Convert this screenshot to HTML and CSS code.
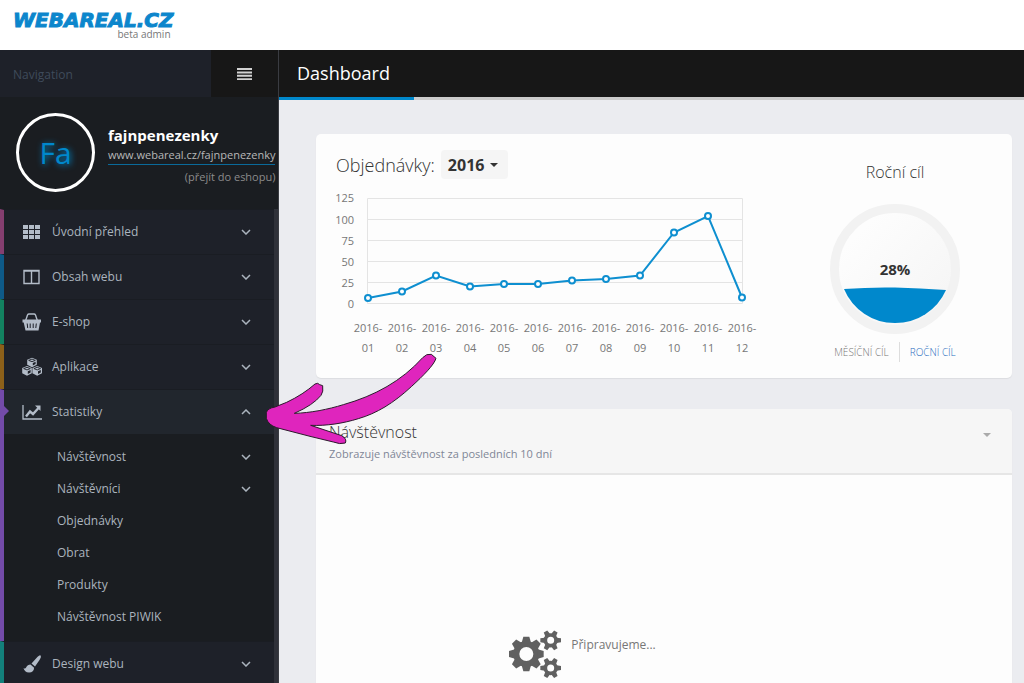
FILE: index.html
```html
<!DOCTYPE html>
<html lang="cs">
<head>
<meta charset="utf-8">
<title>Dashboard – Webareal.cz</title>
<link rel="stylesheet" href="styles.css">
</head>
<body>
<header class="brand">
  <a class="logo" href="#"><span class="logo-name">WEBAREAL.CZ</span><span class="logo-note">beta admin</span></a>
</header>
<div class="shell">
  <aside class="sidebar">
    <div class="side-head">
      <span class="side-title">Navigation</span>
      <button class="burger" type="button" aria-label="Menu"><svg width="15" height="12" viewBox="0 0 15 12"><path d="M0 1h15M0 4.4h15M0 7.8h15M0 11.2h15" stroke="#d2d2d2" stroke-width="2"/></svg></button>
    </div>
    <div class="profile">
      <div class="avatar">Fa</div>
      <div class="who">
        <strong class="who-name">fajnpenezenky</strong>
        <a class="who-link" href="#">www.webareal.cz/fajnpenezenky</a>
        <a class="who-shop" href="#">(přejít do eshopu)</a>
      </div>
    </div>
    <nav class="menu">
      <a class="item plum" href="#"><svg class="icon" viewBox="0 0 20 20"><path fill="#b3bcc8" d="M1 3h5v4H1zM7 3h5v4H7zM13 3h5v4h-5zM1 8h5v4H1zM7 8h5v4H7zM13 8h5v4h-5zM1 13h5v4H1zM7 13h5v4H7zM13 13h5v4h-5z"/></svg><span class="label">Úvodní přehled</span><svg class="chev" viewBox="0 0 10 6"><path d="M1 1l4 4 4-4"/></svg></a>
      <a class="item blue" href="#"><svg class="icon" viewBox="0 0 20 20"><path fill="none" stroke="#b3bcc8" stroke-width="1.4" d="M2 3.5h15v13H2zM9.5 3.5v13M2 4h15"/></svg><span class="label">Obsah webu</span><svg class="chev" viewBox="0 0 10 6"><path d="M1 1l4 4 4-4"/></svg></a>
      <a class="item green" href="#"><svg class="icon" viewBox="0 0 20 20"><path fill="none" stroke="#b3bcc8" stroke-width="1.4" d="M3.500 9l2-6Q6 2 7 2h5q1 0 1.500 1l2 6"/><path fill="#b3bcc8" d="M.5 7.500h18.500v3h-1L16.500 18.500h-13L1.700 10.500H.5z"/><path stroke="#1e2129" stroke-width="1" d="M5.200 11.500l.5 4.500M8.200 11.500V16M11.200 11.500V16M14.300 11.500l-.5 4.500"/></svg><span class="label">E-shop</span><svg class="chev" viewBox="0 0 10 6"><path d="M1 1l4 4 4-4"/></svg></a>
      <a class="item amber" href="#"><svg class="icon" viewBox="0 0 20 20"><g fill="#b3bcc8"><path d="M10 .8l4.800 1.900v5.100L10 10.200 5.200 7.800V2.700z"/><path d="M5 9l4.800 1.900v5.400L5 18.700.2 16.300v-5.400zM15.200 9l4.800 1.900v5.400l-4.800 2.400-4.800-2.400v-5.400z"/></g><path fill="none" stroke="#1e2129" stroke-width=".9" d="M6.700 3.400L10 4.700l3.300-1.300L10 2.100zM1.700 11.600L5 12.900l3.300-1.300L5 10.300zM11.900 11.600l3.300 1.300 3.300-1.300-3.300-1.300z"/><path fill="#1e2129" d="M10.800 6l2.800-1.200v2.300l-2.800 1.400zM5.800 14.200L8.600 13v2.600L5.800 17zM16 14.200l2.800-1.200v2.600L16 17z"/></svg><span class="label">Aplikace</span><svg class="chev" viewBox="0 0 10 6"><path d="M1 1l4 4 4-4"/></svg></a>
      <a class="item violet open" href="#"><svg class="icon" viewBox="0 0 20 20"><path fill="none" stroke="#b3bcc8" stroke-width="1.300" d="M1 3v14h19"/><path fill="none" stroke="#b3bcc8" stroke-width="2.400" d="M4 14.500l4-5 3 2.500 5.500-6"/><path fill="#b3bcc8" d="M13 3.500h5.500V9z"/></svg><span class="label">Statistiky</span><svg class="chev" viewBox="0 0 10 6"><path d="M1 5l4-4 4 4"/></svg></a>
      <div class="submenu">
        <a class="sub" href="#"><span>Návštěvnost</span><svg class="chev" viewBox="0 0 10 6"><path d="M1 1l4 4 4-4"/></svg></a>
        <a class="sub" href="#"><span>Návštěvníci</span><svg class="chev" viewBox="0 0 10 6"><path d="M1 1l4 4 4-4"/></svg></a>
        <a class="sub" href="#"><span>Objednávky</span></a>
        <a class="sub" href="#"><span>Obrat</span></a>
        <a class="sub" href="#"><span>Produkty</span></a>
        <a class="sub" href="#"><span>Návštěvnost PIWIK</span></a>
      </div>
      <a class="item teal" href="#"><svg class="icon" viewBox="0 0 20 20"><path fill="#b3bcc8" d="M18.500 1.500c.8 1 .3 2.500-1 4.500l-4.500 6.500-3.500-3 5-5.500c2-2 3.300-3 4-2.500zM8.500 10.500l3.600 3.200c0 3-2 4.800-5 4.800-3.200 0-5-1.800-5.600-4.500 1 .8 2 .8 2.600-.5.800-2 2.600-3 4.400-3z"/></svg><span class="label">Design webu</span><svg class="chev" viewBox="0 0 10 6"><path d="M1 1l4 4 4-4"/></svg></a>
    </nav>
  </aside>
  <main class="main">
    <div class="topbar"><h1 class="page-title">Dashboard</h1></div>
    <div class="content">
      <section class="card orders">
        <div class="orders-left">
          <div class="orders-head">
            <h2 class="orders-title">Objednávky:</h2>
            <button class="year" type="button">2016<span class="caret"></span></button>
          </div>
          <svg class="chart" viewBox="0 0 430 170" role="img" aria-label="Objednávky 2016">
            <path class="grid" d="M31.500 8.500h375v105h-375zM31.500 29.500h375M31.500 50.500h375M31.500 71.500h375M31.500 92.500h375"/>
            <g class="axis end"><text x="18" y="12">125</text><text x="18" y="34">100</text><text x="18" y="55">75</text><text x="18" y="76">50</text><text x="18" y="97">25</text><text x="18" y="118">0</text></g>
            <g class="axis mid">
              <text x="32" y="142">2016-</text><text x="32" y="162">01</text>
              <text x="66" y="142">2016-</text><text x="66" y="162">02</text>
              <text x="100" y="142">2016-</text><text x="100" y="162">03</text>
              <text x="134" y="142">2016-</text><text x="134" y="162">04</text>
              <text x="168" y="142">2016-</text><text x="168" y="162">05</text>
              <text x="202" y="142">2016-</text><text x="202" y="162">06</text>
              <text x="236" y="142">2016-</text><text x="236" y="162">07</text>
              <text x="270" y="142">2016-</text><text x="270" y="162">08</text>
              <text x="304" y="142">2016-</text><text x="304" y="162">09</text>
              <text x="338" y="142">2016-</text><text x="338" y="162">10</text>
              <text x="372" y="142">2016-</text><text x="372" y="162">11</text>
              <text x="406" y="142">2016-</text><text x="406" y="162">12</text>
            </g>
            <path class="line" d="M32 108L66 101.500 100 85.500 134 96.500 168 94 202 94 236 90.500 270 89 304 85.500 338 42.500 372 26 406 107.500"/>
            <g class="dots"><circle cx="32" cy="108" r="3"/><circle cx="66" cy="101.500" r="3"/><circle cx="100" cy="85.500" r="3"/><circle cx="134" cy="96.500" r="3"/><circle cx="168" cy="94" r="3"/><circle cx="202" cy="94" r="3"/><circle cx="236" cy="90.500" r="3"/><circle cx="270" cy="89" r="3"/><circle cx="304" cy="85.500" r="3"/><circle cx="338" cy="42.500" r="3"/><circle cx="372" cy="26" r="3"/><circle cx="406" cy="107.500" r="3"/></g>
          </svg>
        </div>
        <div class="goal">
          <h2 class="goal-title">Roční cíl</h2>
          <svg class="meter" viewBox="0 0 130 130" role="img" aria-label="28%">
            <defs><linearGradient id="bowl" x1="0" y1="0" x2="1" y2="1"><stop offset=".2" stop-color="#fdfdfd"/><stop offset=".8" stop-color="#f6f6f6"/></linearGradient></defs>
            <circle cx="65" cy="65" r="60.500" fill="url(#bowl)" stroke="#f2f2f2" stroke-width="9"/>
            <path fill="#0088cc" d="M14 85Q40 83 65 83.500T116 86A55.500 55.500 0 0 1 14 85z"/>
            <text class="percent" x="65" y="71">28%</text>
          </svg>
          <div class="tabs"><a class="tab" href="#">MĚSÍČNÍ CÍL</a><a class="tab active" href="#">ROČNÍ CÍL</a></div>
        </div>
      </section>
      <section class="card visits">
        <header class="visits-head">
          <div><h2 class="visits-title">Návštěvnost</h2><p class="visits-note">Zobrazuje návštěvnost za posledních 10 dní</p></div>
          <button class="toggle" type="button" aria-label="Sbalit"><span class="caret"></span></button>
        </header>
        <div class="loading">
          <svg class="gears" viewBox="85 88 165 150" fill="#606060">
            <defs>
              <path id="t" d="M-14-34L-9-52H9L14-34z"/><path id="s" d="M-8-18L-6-31H6L8-18z"/>
              <g id="small"><circle r="16" fill="none" stroke="#606060" stroke-width="11"/><use href="#s" transform="rotate(30)"/><use href="#s" transform="rotate(90)"/><use href="#s" transform="rotate(150)"/><use href="#s" transform="rotate(210)"/><use href="#s" transform="rotate(270)"/><use href="#s" transform="rotate(330)"/></g>
            </defs>
            <g transform="translate(140 163)"><circle r="30" fill="none" stroke="#606060" stroke-width="18"/><use href="#t"/><use href="#t" transform="rotate(45)"/><use href="#t" transform="rotate(90)"/><use href="#t" transform="rotate(135)"/><use href="#t" transform="rotate(180)"/><use href="#t" transform="rotate(225)"/><use href="#t" transform="rotate(270)"/><use href="#t" transform="rotate(315)"/></g>
            <use href="#small" transform="translate(213 122)"/><use href="#small" transform="translate(213 205)"/>
          </svg>
          <p class="loading-text">Připravujeme...</p>
        </div>
      </section>
    </div>
  </main>
</div>
<svg class="pointer" viewBox="0 0 570 390" aria-hidden="true"><path fill="#df25bd" stroke="#2b1a2b" stroke-width="3" stroke-linejoin="round" d="M103 205C150 204 205 193 250 179C345 152 425 108 488 38Q500 25 514 28L528 40C522 60 490 92 455 124C400 175 350 205 295 221C250 235 200 243 152 241L245 272Q262 282 256 294Q240 299 220 291L150 274 50 248Q25 240 19 220V203Q22 190 45 186L80 172Q130 148 165 117L173 115 179 119 188 122Q191 140 183 151Q160 180 103 205z"/></svg>
</body>
</html>
```
FILE: styles.css
```css
* { box-sizing: border-box; }
body { margin: 0; height: 100vh; overflow: hidden; display: flex; flex-direction: column; background: #ebecf0; font: 12px/20px "Open Sans", sans-serif; color: #777; }
a { color: inherit; text-decoration: none; }
h1, h2, p { margin: 0; font-weight: 400; }
button { border: 0; margin: 0; padding: 0; font: inherit; color: inherit; cursor: pointer; }

.brand { height: 50px; flex: none; padding: 12px 13px; background: #fff; }
.logo { display: inline-flex; flex-direction: column; align-items: flex-end; }
.logo-name { font: italic 700 20px/16px "DejaVu Sans", sans-serif; color: #0c86cc; -webkit-text-stroke: 1px #0c86cc; }
.logo-note { padding-right: 3px; font-size: 10px; line-height: 12px; color: #777; }

.shell { flex: 1; min-height: 0; display: flex; }
.sidebar { width: 279px; flex: none; background: #1a1d21; border-right: 1px solid #3a3c42; }
.side-head { display: flex; height: 47px; background: #171717; }
.side-title { flex: 1; padding: 15px 13px; background: #1e2129; color: #3f4b5b; line-height: 20px; }
.burger { width: 67px; background: #171717; display: flex; align-items: center; justify-content: center; }
.profile { display: flex; height: 112px; gap: 13px; padding: 16px 6px 0 16px; }
.avatar { width: 79px; height: 79px; flex: none; border: 3px solid #fff; border-radius: 50%; color: #0088cc; font-size: 30px; line-height: 74px; text-align: center; text-shadow: 1px 1px 6px #0088cc; }
.who { display: flex; flex-direction: column; align-items: flex-start; padding-top: 12px; }
.who-name { color: #fff; font-size: 15px; line-height: 20px; }
.who-link { color: #b8b8b8; font-size: 11px; line-height: 19px; border-bottom: 1px solid #0a6a9a; }
.who-shop { align-self: flex-end; color: #8c8c8c; font-size: 11px; line-height: 24px; }

.menu { border-right: 4px solid #2f3139; background: #1e2129; color: #abb4be; }
.item { position: relative; display: flex; align-items: center; height: 45px; padding: 0 23px 0 18px; border-left: 4px solid; border-top: 1px solid #1a1d23; }
.icon { width: 20px; height: 20px; flex: none; }
.label { flex: 1; padding-left: 10px; color: #abb4be; }
.chev { width: 10px; height: 6px; fill: none; stroke: #abb4be; stroke-width: 1.5; }
.plum { border-left-color: #853f70; }
.blue { border-left-color: #0e5a88; }
.green { border-left-color: #138260; }
.amber { border-left-color: #8c6019; }
.violet { border-left-color: #734ba9; }
.teal { border-left-color: #13807b; }
.open { background: #21262d; }
.open::before { content: ""; position: absolute; left: 0; top: 16px; border: 5px solid transparent; border-left-color: #734ba9; border-right: 0; }
.submenu { padding: 7px 0 8px; background: #1a1d21; border-left: 4px solid #734ba9; }
.sub { display: flex; align-items: center; justify-content: space-between; height: 32px; padding: 0 23px 0 53px; }

.main { flex: 1; min-width: 0; display: flex; flex-direction: column; }
.topbar { flex: none; height: 50px; padding: 11px 18px; color: #fff; background: linear-gradient(#0088cc, #0088cc) 0 100% / 135px 3px no-repeat, linear-gradient(#ccc, #ccc) 0 100% / 100% 3px no-repeat, #171717; }
.page-title { font-size: 18px; line-height: 24px; }
.content { flex: 1; min-height: 0; display: flex; flex-direction: column; gap: 31px; padding: 34px 12px 0 37px; }
.card { background: #fdfdfd; border-radius: 5px; box-shadow: 0 1px 1px #dcdde0; }
.orders { flex: none; display: grid; grid-template-columns: 1fr 234px; padding: 16px 0; }
.orders-left { padding-left: 20px; }
.orders-head { display: flex; align-items: center; gap: 6px; height: 29px; }
.orders-title { font-size: 18px; font-weight: 300; color: #333; }
.year { display: flex; align-items: center; gap: 6px; height: 29px; padding: 0 10px 0 7px; border-radius: 4px; background: #f5f5f5; color: #333; font-size: 16px; font-weight: 700; }
.caret { border: 4px solid transparent; border-top-color: currentColor; border-bottom: 0; }
.chart { display: block; width: 430px; max-width: 100%; margin-top: 11px; }
.grid { fill: none; stroke: #e4e4e4; }
.line { fill: none; stroke: #0e8fd0; stroke-width: 2; }
.dots { fill: #fff; stroke: #0e8fd0; stroke-width: 2; }
.axis { fill: #777; font-size: 11px; }
.end { text-anchor: end; }
.mid { text-anchor: middle; }
.goal { display: flex; flex-direction: column; align-items: center; padding-top: 12px; }
.goal-title { font-size: 16px; font-weight: 300; color: #333; }
.meter { width: 130px; height: 130px; margin-top: 22px; }
.percent { fill: #333; font-size: 15px; font-weight: 700; text-anchor: middle; }
.tabs { display: flex; margin-top: 8px; font-size: 10px; font-weight: 300; }
.tab { padding: 0 10px; }
.active { color: #2a6fc0; border-left: 1px solid #ddd; }

.visits { flex: 1; min-height: 0; display: flex; flex-direction: column; overflow: hidden; border-radius: 5px 5px 0 0; }
.visits-head { display: flex; justify-content: space-between; height: 66px; flex: none; padding: 12px 21px 0 13px; background: #f6f6f6; border-bottom: 2px solid #e6e6e6; }
.visits-title { font-size: 16px; line-height: 22px; font-weight: 300; color: #333; }
.visits-note { font-size: 11px; line-height: 22px; color: #808697; }
.toggle { align-self: flex-start; padding: 12px 0; background: none; display: flex; color: #aaa; }
.loading { display: flex; align-items: flex-start; justify-content: center; gap: 8px; padding-top: 154px; padding-right: 164px; }
.gears { width: 55px; height: 50px; flex: none; }
.loading-text { padding-top: 6px; font-size: 12px; }

.pointer { position: absolute; left: 260px; top: 345px; width: 190px; height: 130px; pointer-events: none; }
```
